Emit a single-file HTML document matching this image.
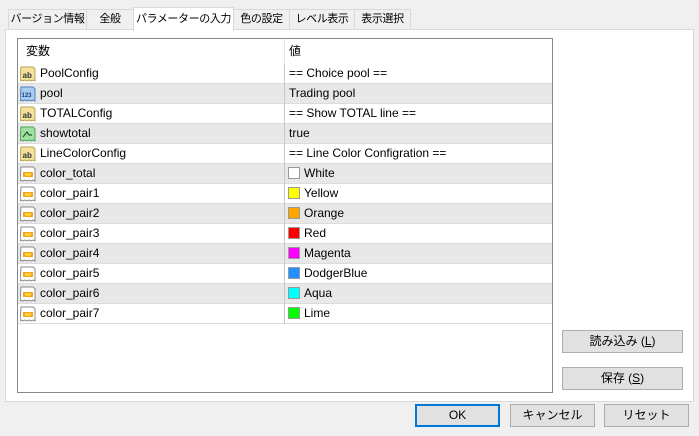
<!DOCTYPE html>
<html><head><meta charset="utf-8"><style>
*{box-sizing:border-box;margin:0;padding:0}
body{width:699px;height:436px;background:#f0f0f0;position:relative;overflow:hidden;font-family:"Liberation Sans","Noto Sans CJK JP",sans-serif;font-size:12px;color:#000}
.tab{position:absolute;top:9px;height:21px;border:1px solid #d9d9d9;border-bottom:none;background:#f0f0f0;text-align:center;line-height:19px;font-size:11px;white-space:nowrap;letter-spacing:-0.4px;overflow:hidden}
.tab.act{top:7px;height:24px;background:#fff;z-index:2;border-color:#d9d9d9;line-height:22px}
.panel{position:absolute;left:5px;top:29px;width:689px;height:373px;background:#fff;border:1px solid #d9d9d9}
.grid{position:absolute;left:17px;top:38px;width:536px;height:355px;border:1px solid #828790;background:#fff;overflow:hidden}
.row{position:absolute;left:0;width:534px;height:20px;border-bottom:1px solid #dcdcdc;line-height:19px}
.row.g{background:#e8e8e8}
.c1{position:absolute;left:22px;top:0}
.c2{position:absolute;left:266px;top:0;height:20px;border-left:1px solid #c8c8c8;padding-left:4px;width:268px}
.hdr{position:absolute;left:0;top:0;width:534px;height:25px;line-height:25px}
.ic{position:absolute;left:2px;top:2px;width:16px;height:16px}
.sw{display:inline-block;width:12px;height:12px;border:1px solid #999;vertical-align:-2px;margin-right:4px;margin-left:-1px}
.btn{position:absolute;height:23px;background:#e1e1e1;border:1px solid #adadad;text-align:center;line-height:21px;white-space:nowrap}
</style></head><body>
<div class="tab" style="left:8px;width:79px">バージョン情報</div>
<div class="tab" style="left:86px;width:48px">全般</div>
<div class="tab act" style="left:133px;width:101px">パラメーターの入力</div>
<div class="tab" style="left:233px;width:57px">色の設定</div>
<div class="tab" style="left:289px;width:66px">レベル表示</div>
<div class="tab" style="left:354px;width:57px">表示選択</div>
<div class="panel"></div>
<div class="grid">
<div class="hdr"><span style="position:absolute;left:8px">変数</span><span style="position:absolute;left:271px">値</span></div>
<div style="position:absolute;left:266px;top:0;width:1px;height:25px;background:#e5e5e5"></div>
<svg width="0" height="0" style="position:absolute"><defs>
<g id="ab"><path d="M1 1h12l2 2v12l-2-1-2 1-2-1-2 1-2-1-2 1-2-1-1 1z" fill="#f3e39a" stroke="#b9a24e"/><text x="2.5" y="12" font-size="8" font-family="Liberation Sans" fill="#333" font-weight="bold">ab</text></g>
<g id="n"><path d="M1 1h12l2 2v12l-2-1-2 1-2-1-2 1-2-1-2 1-2-1-1 1z" fill="#a8ccef" stroke="#4f81bd"/><text x="1.5" y="11" font-size="6" font-family="Liberation Sans" fill="#1a3a80" font-weight="bold">123</text></g>
<g id="b"><path d="M1 1h12l2 2v12l-2-1-2 1-2-1-2 1-2-1-2 1-2-1-1 1z" fill="#9ee0a4" stroke="#4aa355"/><path d="M3 11l4-5 2 3h3" stroke="#225522" fill="none" stroke-width="1.2"/></g>
<g id="c"><path d="M1 1h12l2 2v12l-2-1-2 1-2-1-2 1-2-1-2 1-2-1-1 1z" fill="#fff" stroke="#888"/><rect x="3" y="6" width="10" height="5" fill="#f7a21b"/><rect x="5" y="7.5" width="6" height="2" fill="#ffe14a"/></g>
</defs></svg>
<div class="row" style="top:25px"><svg class="ic"><use href="#ab"/></svg><span class="c1">PoolConfig</span><span class="c2">== Choice pool ==</span></div>
<div class="row g" style="top:45px"><svg class="ic"><use href="#n"/></svg><span class="c1">pool</span><span class="c2">Trading pool</span></div>
<div class="row" style="top:65px"><svg class="ic"><use href="#ab"/></svg><span class="c1">TOTALConfig</span><span class="c2">== Show TOTAL line ==</span></div>
<div class="row g" style="top:85px"><svg class="ic"><use href="#b"/></svg><span class="c1">showtotal</span><span class="c2">true</span></div>
<div class="row" style="top:105px"><svg class="ic"><use href="#ab"/></svg><span class="c1">LineColorConfig</span><span class="c2">== Line Color Configration ==</span></div>
<div class="row g" style="top:125px"><svg class="ic"><use href="#c"/></svg><span class="c1">color_total</span><span class="c2"><i class="sw" style="background:#fff"></i>White</span></div>
<div class="row" style="top:145px"><svg class="ic"><use href="#c"/></svg><span class="c1">color_pair1</span><span class="c2"><i class="sw" style="background:#ff0"></i>Yellow</span></div>
<div class="row g" style="top:165px"><svg class="ic"><use href="#c"/></svg><span class="c1">color_pair2</span><span class="c2"><i class="sw" style="background:#ffa500"></i>Orange</span></div>
<div class="row" style="top:185px"><svg class="ic"><use href="#c"/></svg><span class="c1">color_pair3</span><span class="c2"><i class="sw" style="background:#f00"></i>Red</span></div>
<div class="row g" style="top:205px"><svg class="ic"><use href="#c"/></svg><span class="c1">color_pair4</span><span class="c2"><i class="sw" style="background:#f0f"></i>Magenta</span></div>
<div class="row" style="top:225px"><svg class="ic"><use href="#c"/></svg><span class="c1">color_pair5</span><span class="c2"><i class="sw" style="background:#1e90ff"></i>DodgerBlue</span></div>
<div class="row g" style="top:245px"><svg class="ic"><use href="#c"/></svg><span class="c1">color_pair6</span><span class="c2"><i class="sw" style="background:#0ff"></i>Aqua</span></div>
<div class="row" style="top:265px"><svg class="ic"><use href="#c"/></svg><span class="c1">color_pair7</span><span class="c2"><i class="sw" style="background:#0f0"></i>Lime</span></div>
</div>
<div class="btn" style="left:562px;top:330px;width:121px">読み込み (<u>L</u>)</div>
<div class="btn" style="left:562px;top:367px;width:121px">保存 (<u>S</u>)</div>
<div class="btn" style="left:415px;top:404px;width:85px;border:2px solid #0078d7;line-height:19px">OK</div>
<div class="btn" style="left:510px;top:404px;width:85px">キャンセル</div>
<div class="btn" style="left:604px;top:404px;width:85px">リセット</div>
</body></html>
